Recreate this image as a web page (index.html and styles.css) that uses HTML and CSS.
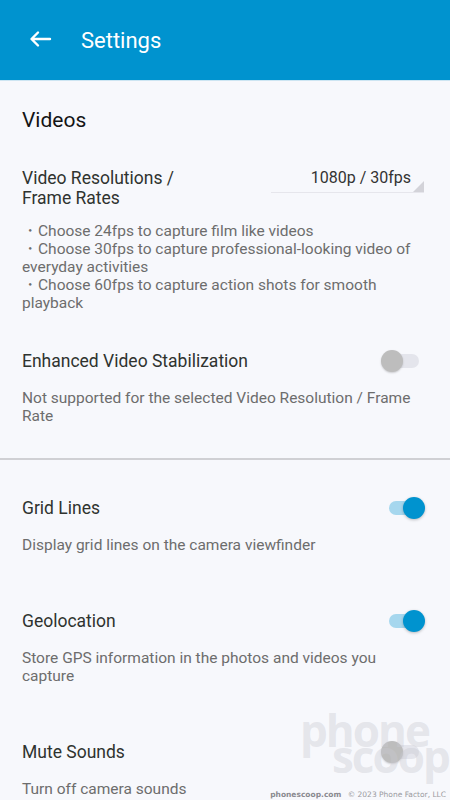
FILE: index.html
```html
<!DOCTYPE html>
<html>
<head>
<meta charset="utf-8">
<link rel="stylesheet" href="styles.css">
</head>
<body>
<header class="appbar">
  <svg class="back" width="24" height="24" viewBox="0 0 24 24"><path d="M22 12H4M10 5.5L3.5 12L10 18.5" fill="none" stroke="#fff" stroke-width="2.4" stroke-linecap="round" stroke-linejoin="round"/></svg>
  <span class="appbar-title">Settings</span>
</header>
<main class="content">
  <h2 class="section">Videos</h2>

  <div class="pref pref-first">
    <div class="row row-top">
      <div class="title title-narrow">Video Resolutions / Frame Rates</div>
      <div class="dropdown"><span>1080p / 30fps</span><i class="corner"></i></div>
    </div>
    <div class="desc desc-gap-l">・Choose 24fps to capture film like videos<br>・Choose 30fps to capture professional-looking video of everyday activities<br>・Choose 60fps to capture action shots for smooth playback</div>
  </div>

  <div class="pref pref-mid">
    <div class="row">
      <div class="title">Enhanced Video Stabilization</div>
      <div class="switch"><span class="track"></span><span class="thumb"></span></div>
    </div>
    <div class="desc">Not supported for the selected Video Resolution / Frame Rate</div>
  </div>
</main>
<div class="divider"></div>
<main class="content">
  <div class="pref pref-after-div">
    <div class="row">
      <div class="title">Grid Lines</div>
      <div class="switch on"><span class="track"></span><span class="thumb"></span></div>
    </div>
    <div class="desc">Display grid lines on the camera viewfinder</div>
  </div>

  <div class="pref pref-far">
    <div class="row">
      <div class="title">Geolocation</div>
      <div class="switch on"><span class="track"></span><span class="thumb"></span></div>
    </div>
    <div class="desc">Store GPS information in the photos and videos you capture</div>
  </div>

  <div class="pref pref-far">
    <div class="row">
      <div class="title">Mute Sounds</div>
      <div class="switch"><span class="track"></span><span class="thumb"></span></div>
    </div>
    <div class="desc">Turn off camera sounds</div>
  </div>
</main>
<div class="watermark">
  <span class="wm-phone">phone</span>
  <span class="wm-scoop">scoop</span>
  <span class="wm-credit"><b>phonescoop.com</b> © 2023 Phone Factor, LLC</span>
</div>
</body>
</html>
```
FILE: styles.css
```css
html, body {
  margin: 0;
  padding: 0;
}
body {
  width: 450px;
  height: 800px;
  overflow: hidden;
  background: #f7f8fc;
  font-family: Roboto, "Noto Sans", "Liberation Sans", sans-serif;
  position: relative;
}
.appbar {
  height: 80px;
  background: #0093cf;
  border-bottom: 1px solid #cde5f2;
  display: flex;
  align-items: center;
  padding-left: 28px;
  box-sizing: content-box;
}
.back {
  display: block;
  margin-top: -2px;
}
.appbar-title {
  color: #fff;
  font-size: 22px;
  margin-left: 29px;
  margin-top: 1px;
}
.content {
  display: block;
  padding: 0 26px 0 22px;
}
.section {
  margin: 27px 0 0;
  font-size: 21px;
  font-weight: 400;
  line-height: 24px;
  color: #141414;
}
.pref-first { padding-top: 36px; }
.pref-mid { padding-top: 39px; }
.pref-after-div { padding-top: 38px; }
.pref-far { padding-top: 57px; }
.row {
  display: flex;
  justify-content: space-between;
  align-items: center;
}
.row-top {
  align-items: flex-start;
}
.title {
  font-size: 17.5px;
  line-height: 20px;
  color: #2f332f;
}
.title-narrow {
  max-width: 175px;
}
.desc {
  margin-top: 18px;
  font-size: 15.5px;
  line-height: 18px;
  color: #6d6d6d;
}
.desc-gap-l {
  margin-top: 14px;
}
.dropdown {
  position: relative;
  width: 153px;
  height: 25px;
  border-bottom: 1px solid #e6e6ec;
  text-align: right;
  font-size: 16px;
  line-height: 20px;
  color: #333;
  box-sizing: border-box;
  padding-right: 13px;
}
.corner {
  position: absolute;
  right: 0;
  bottom: 0;
  width: 0;
  height: 0;
  border-left: 11px solid transparent;
  border-bottom: 11px solid #d3d3d9;
}
.switch {
  position: relative;
  width: 44px;
  height: 22px;
  flex: none;
  margin: -1px -1px -1px 0;
}
.track {
  position: absolute;
  left: 5px;
  right: 6px;
  top: 4px;
  height: 14px;
  border-radius: 7px;
  background: #e4e5ec;
}
.thumb {
  position: absolute;
  left: 0;
  top: 0;
  width: 22px;
  height: 22px;
  border-radius: 50%;
  background: #bdbdbd;
  box-shadow: 0 1px 2px rgba(0,0,0,0.18);
}
.switch.on .track {
  background: #a6d7ee;
  left: 8px;
  right: 5px;
}
.switch.on .thumb {
  left: auto;
  right: 0;
  background: #0093cf;
  box-shadow: 0 1px 3px rgba(0,0,0,0.25);
}
.divider {
  height: 2px;
  margin-top: 33px;
  background: #d0d0d4;
}
.watermark {
  position: absolute;
  right: 0;
  bottom: 0;
  width: 190px;
  height: 90px;
  pointer-events: none;
}
.wm-phone, .wm-scoop {
  position: absolute;
  font-family: "Open Sans", "Liberation Sans", sans-serif;
  font-weight: 700;
  color: rgba(200, 200, 208, 0.4);
  letter-spacing: -2px;
  line-height: 1;
}
.wm-phone {
  left: 40px;
  top: -2px;
  font-size: 44px;
}
.wm-scoop {
  left: 72px;
  top: 24px;
  font-size: 44px;
}
.wm-credit {
  position: absolute;
  right: 4px;
  bottom: 1px;
  font-family: "DejaVu Sans", sans-serif;
  font-size: 7.5px;
  color: #9a9aa0;
  white-space: nowrap;
}
.wm-credit b {
  color: #8a8a90;
  margin-right: 4px;
}
```
